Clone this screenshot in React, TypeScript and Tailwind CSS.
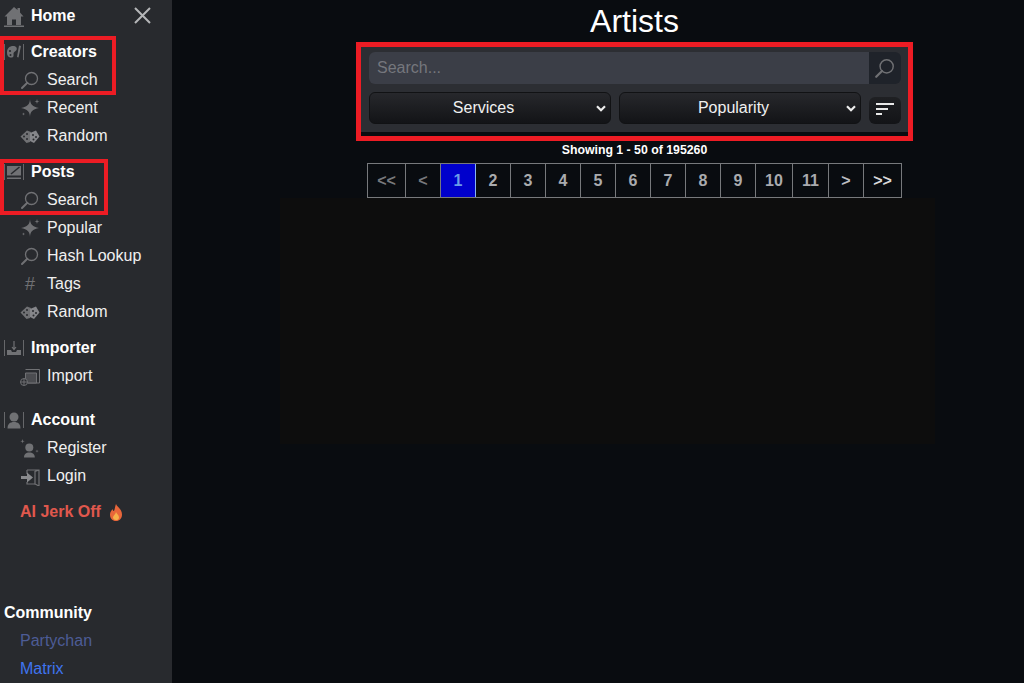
import type { ReactNode } from "react";

const gray = "#707174";

// shared icon shapes, all on a 20x20 box
const SearchIcon = ({ size = 20, color = gray }: { size?: number; color?: string }) => (
  <svg width={size} height={size} viewBox="0 0 20 20" fill="none" stroke={color} strokeWidth="1.3">
    <circle cx="11.500" cy="8.500" r="6" />
    <path d="M7.300 12.700 2 18" strokeWidth="2" strokeLinecap="round" />
  </svg>
);

const SparkleIcon = () => (
  <svg width="20" height="20" viewBox="0 0 20 20" fill={gray}>
    <path d="M10 1C10.300 6.500 12.500 8.800 19 10 12.500 11.200 10.300 13.500 10 19 9.700 13.500 7.500 11.200 1 10 7.500 8.800 9.700 6.500 10 1Z" />
    <path d="m17 1 .6 1.900 1.900.6-1.900.6-.6 1.900-.6-1.900-1.900-.6 1.900-.6ZM3.500 14.500l.4 1.100 1.100.4-1.100.4-.4 1.100-.4-1.100L2 16l1.100-.4Z" />
  </svg>
);

const DiceIcon = () => (
  <svg width="20" height="20" viewBox="0 0 20 20">
    <path d="M.5 10.500 7 4.500l4 1.500-1 10-3.500 1Z" fill={gray} />
    <path d="m10 7 6-2.500 3.500 6L14 17l-4-2Z" fill="#85868a" />
    <circle cx="4" cy="10.500" r="1" fill="#282a2e" />
    <circle cx="7" cy="8" r="1" fill="#282a2e" />
    <circle cx="7" cy="13" r="1" fill="#282a2e" />
    <circle cx="13" cy="9" r="1" fill="#282a2e" />
    <circle cx="16" cy="11" r="1" fill="#282a2e" />
    <circle cx="13.500" cy="13.500" r="1" fill="#282a2e" />
  </svg>
);

const ImportIcon = () => (
  <svg width="20" height="20" viewBox="0 0 20 20" fill="none" stroke={gray} strokeWidth="1">
    <path d="M5.500 3.500h14v13.500H8" />
    <path d="M5.500 7h11v10H5.500Z" fill="#4b4c50" />
    <circle cx="4" cy="16" r="3.500" fill="#282a2e" />
    <path d="M4 13v6M1 16h6" />
  </svg>
);

const RegisterIcon = () => (
  <svg width="20" height="20" viewBox="0 0 20 20" fill={gray}>
    <circle cx="9.300" cy="9.500" r="4" />
    <path d="M4 19.500c0-3.500 2-5 5.300-5s5.500 1.500 5.500 5Z" />
    <path d="m2.500 1 .5 1.700 1.700.5-1.700.5-.5 1.700-.5-1.700-1.700-.5 1.700-.5ZM17 11.500l.4 1.200 1.300.4-1.300.4-.4 1.200-.4-1.200-1.300-.4 1.300-.4Z" />
  </svg>
);

const LoginIcon = () => (
  <svg width="20" height="20" viewBox="0 0 20 20">
    <path d="M7 4h12v16l-4-2V5.500L19 4" fill="none" stroke={gray} strokeWidth="1.200" />
    <path d="M7 4v4M7 16v2h8" fill="none" stroke={gray} strokeWidth="1.200" />
    <path d="M1 10h6V6.500l6 5-6 5V13H1Z" fill="#8a8b8e" />
  </svg>
);

const FlameIcon = () => (
  <svg width="14" height="17" viewBox="0 0 14 17">
    <path d="M7 0c1 3 6 5 6 10.500C13 14.500 10.500 17 7 17s-6-2.500-6-6.500c0-2.500 1.500-4 2.500-5.500.3 1.500 1 2 1.500 2C6 5 6 2.500 7 0Z" fill="#e8663a" />
    <path d="M7 8c.5 1.500 3 3 3 5.500C10 15.500 8.500 16 7 16s-3-.8-3-2.500C4 11.500 6.500 10.500 7 8Z" fill="#f7b04a" />
  </svg>
);

// section icon sits between two thin vertical bars
const Bars = ({ children }: { children: ReactNode }) => (
  <svg width="20" height="18" viewBox="0 0 20 18" fill="none">
    <path d="M.5 1v16M19.500 1v16" stroke="#66676a" />
    {children}
  </svg>
);

const PaletteIcon = () => (
  <Bars>
    <path d="M3 9.500C3 5 6 3 9 3s4.500 2 3.500 4-3 1.500-3 3.500.5 3.500-1.500 4-5-.5-5-5Z" fill={gray} />
    <path d="m15 2.500 2 .5-2.500 11.500-1.500-.5Z" fill={gray} />
    <circle cx="6" cy="8" r="1.100" fill="#282a2e" />
    <circle cx="6.500" cy="12" r="1" fill="#282a2e" />
  </Bars>
);

const PostsIcon = () => (
  <Bars>
    <path d="M3 3h14v9.500H3Z" fill={gray} />
    <path d="M3 14.500h14V16H3Z" fill={gray} />
    <path d="m7 11 8.500-7" stroke="#282a2e" strokeWidth="1.500" />
  </Bars>
);

const ImporterIcon = () => (
  <Bars>
    <path d="M3 11h4l1 2h4l1-2h4v5H3Z" fill={gray} />
    <path d="M10 2v8M8 8l2 2.500L12 8" stroke={gray} strokeWidth="1.200" />
  </Bars>
);

const AccountIcon = () => (
  <Bars>
    <circle cx="10" cy="6" r="4.500" fill={gray} />
    <path d="M3.500 17.500c0-4.500 2.500-6.500 6.500-6.500s6.500 2 6.500 6.500Z" fill={gray} />
  </Bars>
);

const Header = ({ icon, children }: { icon: ReactNode; children: ReactNode }) => (
  <div className="flex h-7 items-center pl-1 font-bold text-white">
    <span className="flex w-[27px] shrink-0">{icon}</span>
    {children}
  </div>
);

const Item = ({ icon, children }: { icon: ReactNode; children: ReactNode }) => (
  <div className="flex h-7 items-center pl-5 text-[#f0f0f0]">
    <span className="flex w-[27px] shrink-0">{icon}</span>
    {children}
  </div>
);

const Chevron = () => (
  <svg width="10" height="7" viewBox="0 0 10 7" fill="none" stroke="#eeeeee" strokeWidth="2.200">
    <path d="m1 1.200 4 4 4-4" />
  </svg>
);

const Select = ({ label }: { label: string }) => (
  <div className="relative flex h-8 flex-1 items-center justify-center rounded-md border border-[#111214] bg-gradient-to-b from-[#27282c] to-[#131417] pr-[13px] text-[#f0f0f0]">
    {label}
    <span className="absolute right-[4px] top-[12px] flex">
      <Chevron />
    </span>
  </div>
);

const pages = [
  { label: "<<", w: "w-[38px]", tone: "text-[#77797c]" },
  { label: "<", w: "w-[35px]", tone: "text-[#77797c]" },
  { label: "1", w: "w-[35px]", tone: "text-[#6c9ce8]", active: true },
  { label: "2", w: "w-[35px]" },
  { label: "3", w: "w-[35px]" },
  { label: "4", w: "w-[35px]" },
  { label: "5", w: "w-[35px]" },
  { label: "6", w: "w-[35px]" },
  { label: "7", w: "w-[35px]" },
  { label: "8", w: "w-[35px]" },
  { label: "9", w: "w-[35px]" },
  { label: "10", w: "w-[37px]" },
  { label: "11", w: "w-[36px]" },
  { label: ">", w: "w-[35px]", tone: "text-[#bcbdc0]" },
  { label: ">>", w: "w-[38px]", tone: "text-[#d8d8d8]" },
];

export default function App() {
  return (
    <div className="flex h-[683px] w-[1024px] overflow-hidden bg-[#090c10] font-['Liberation_Sans',Arial,sans-serif] text-base">
      <aside className="flex h-full w-[172px] shrink-0 flex-col bg-[#282a2e] pt-[2px]">
        <div className="relative flex h-7 items-center pl-1 font-bold text-white">
          <svg width="20" height="21" viewBox="0 0 20 21" className="mr-[7px]" fill={gray}>
            <path d="M10 1 0.500 10.500H3V19h5v-5.500h4V19h5v-8.500h2.500L16 6.500V2h-2.500v2Z" />
            <path d="M0 19.500h20V21H0Z" />
          </svg>
          Home
          <svg width="17" height="17" viewBox="0 0 17 17" className="absolute left-[134px] top-[5px]" stroke="#b5b6b8" strokeWidth="2">
            <path d="m1 1 15 15M16 1 1 16" />
          </svg>
        </div>

        <div className="relative mt-2">
          <Header icon={<PaletteIcon />}>Creators</Header>
          <Item icon={<SearchIcon />}>Search</Item>
          <div className="absolute left-0 top-[-2px] h-[59px] w-[116px] border-4 border-[#ed1c24]" />
        </div>
        <Item icon={<SparkleIcon />}>Recent</Item>
        <Item icon={<DiceIcon />}>Random</Item>

        <div className="relative mt-2">
          <Header icon={<PostsIcon />}>Posts</Header>
          <Item icon={<SearchIcon />}>Search</Item>
          <div className="absolute left-0 top-px h-[56px] w-[108px] border-4 border-[#ed1c24]" />
        </div>
        <Item icon={<SparkleIcon />}>Popular</Item>
        <Item icon={<SearchIcon />}>Hash Lookup</Item>
        <Item icon={<span className="w-5 text-center text-lg leading-none text-[#707174]">#</span>}>Tags</Item>
        <Item icon={<DiceIcon />}>Random</Item>

        <div className="mt-2">
          <Header icon={<ImporterIcon />}>Importer</Header>
          <Item icon={<ImportIcon />}>Import</Item>
        </div>

        <div className="mt-4">
          <Header icon={<AccountIcon />}>Account</Header>
          <Item icon={<RegisterIcon />}>Register</Item>
          <Item icon={<LoginIcon />}>Login</Item>
        </div>

        <div className="mt-2 flex h-7 items-center gap-2 pl-5 font-bold text-[#e0584d]">
          AI Jerk Off
          <FlameIcon />
        </div>

        <div className="mt-auto">
          <div className="flex h-7 items-center pl-1 font-bold text-white">Community</div>
          <div className="flex h-7 items-center pl-5 text-[#4d5c96]">Partychan</div>
          <div className="flex h-7 items-center pl-5 text-[#3f74f0]">Matrix</div>
        </div>
      </aside>

      <main className="flex flex-1 flex-col pl-[184px]">
        <h1 className="mt-[3px] h-[39px] w-[557px] text-center text-[32px] leading-[37px] text-white">Artists</h1>

        <div className="h-[99px] w-[557px] border-[5px] border-[#ed1c24]">
          <div className="flex h-[85px] flex-col gap-2 bg-[#2c2e33] pl-2 pr-[7px] pt-[5px]">
            <div className="flex h-8">
              <div className="flex flex-1 items-center rounded-l-md bg-[#3b3e47] pl-2 text-[#75777d]">Search...</div>
              <div className="flex w-8 items-center justify-center rounded-r-md bg-[#1f232a]">
                <SearchIcon size={22} />
              </div>
            </div>
            <div className="flex h-8 gap-2">
              <Select label="Services" />
              <Select label="Popularity" />
              <div className="mt-[5px] flex h-[27px] w-8 flex-col gap-[3px] rounded-md bg-gradient-to-b from-[#1f2023] to-[#131417] pl-[7px] pt-[6px]">
                <span className="h-0.5 w-[18px] bg-[#e8e8e8]" />
                <span className="h-0.5 w-3 bg-[#e8e8e8]" />
                <span className="h-0.5 w-1.5 bg-[#e8e8e8]" />
              </div>
            </div>
          </div>
        </div>

        <div className="mt-[1px] w-[557px] text-center text-[12.3px] font-bold leading-4 text-white">Showing 1 - 50 of 195260</div>

        <div className="ml-[11px] mt-[5px] flex h-[35px] w-fit shrink-0 border-y border-l border-[#77797c] font-bold">
          {pages.map((p) => (
            <div
              key={p.label}
              className={`flex h-full items-center justify-center border-r ${p.w} ${
                p.active ? "border-[#8ab4f0] bg-[#0000cc]" : "border-[#77797c]"
              } ${p.tone ?? "text-[#a9abae]"}`}
            >
              {p.label}
            </div>
          ))}
        </div>

        {/* empty card list area, just a shade off the page colour */}
        <div className="ml-[-76px] h-[246px] w-[655px] bg-[#0d0d0d]" />
      </main>
    </div>
  );
}
